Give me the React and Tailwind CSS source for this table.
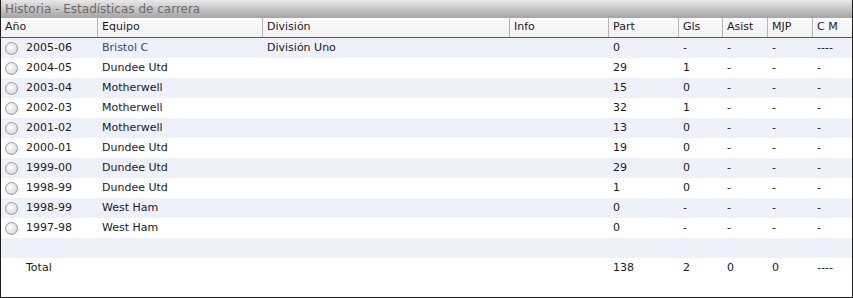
import React from "react";

const cols = [
  { key: "year", label: "Año", w: "w-[97px]" },
  { key: "team", label: "Equipo", w: "w-[165px]" },
  { key: "div", label: "División", w: "w-[247px]" },
  { key: "info", label: "Info", w: "w-[99px]" },
  { key: "part", label: "Part", w: "w-[70px]" },
  { key: "gls", label: "Gls", w: "w-[44px]" },
  { key: "asist", label: "Asist", w: "w-[45px]" },
  { key: "mjp", label: "MJP", w: "w-[45px]" },
  { key: "cm", label: "C M", w: "flex-1" },
];

const rows = [
  ["2005-06", "Bristol C", "División Uno", "", "0", "-", "-", "-", "----", true],
  ["2004-05", "Dundee Utd", "", "", "29", "1", "-", "-", "-"],
  ["2003-04", "Motherwell", "", "", "15", "0", "-", "-", "-"],
  ["2002-03", "Motherwell", "", "", "32", "1", "-", "-", "-"],
  ["2001-02", "Motherwell", "", "", "13", "0", "-", "-", "-"],
  ["2000-01", "Dundee Utd", "", "", "19", "0", "-", "-", "-"],
  ["1999-00", "Dundee Utd", "", "", "29", "0", "-", "-", "-"],
  ["1998-99", "Dundee Utd", "", "", "1", "0", "-", "-", "-"],
  ["1998-99", "West Ham", "", "", "0", "-", "-", "-", "-"],
  ["1997-98", "West Ham", "", "", "0", "-", "-", "-", "-"],
];

function Radio() {
  return (
    <span className="inline-block w-[13px] h-[13px] rounded-full border border-[#9a9a9a] bg-[radial-gradient(circle_at_40%_35%,#ffffff_0%,#e4e4e4_55%,#c8c8c8_100%)] mr-[8px] ml-[4px] shrink-0" />
  );
}

export default function App() {
  return (
    <div
      className="w-[853px] h-[298px] flex flex-col bg-white border-l border-r border-b border-[#1e1e1e] text-[11px] text-[#1a1a1a]"
      style={{ fontFamily: '"DejaVu Sans", Verdana, sans-serif' }}
    >
      <div className="h-[18px] shrink-0 flex items-center px-[4px] bg-gradient-to-b from-[#e9e9e9] to-[#a4a4a4] text-[#6a6a6a] text-[12px]">
        Historia - Estadísticas de carrera
      </div>
      <div className="h-[20px] shrink-0 flex bg-gradient-to-b from-[#fbfbfb] to-[#f1f1f1] border-b border-[#5a5a5a]">
        {cols.map((c, i) => (
          <div
            key={c.key}
            className={`${c.w} flex items-center pl-[4px] ${i < cols.length - 1 ? "border-r border-[#b5b5b5]" : ""}`}
          >
            {c.label}
          </div>
        ))}
      </div>
      {rows.map((r, ri) => (
        <div
          key={ri}
          className={`h-[20px] shrink-0 flex items-center ${ri % 2 === 0 ? "bg-[#eef1fa]" : "bg-white"}`}
        >
          <div className="w-[97px] flex items-center">
            <Radio />
            <span>{r[0]}</span>
          </div>
          <div className={`w-[165px] pl-[4px] ${r[9] ? "text-[#33478a]" : ""}`}>{r[1]}</div>
          <div className="w-[247px] pl-[4px]">{r[2]}</div>
          <div className="w-[99px] pl-[4px]">{r[3]}</div>
          <div className="w-[70px] pl-[4px]">{r[4]}</div>
          <div className="w-[44px] pl-[4px]">{r[5]}</div>
          <div className="w-[45px] pl-[4px]">{r[6]}</div>
          <div className="w-[45px] pl-[4px]">{r[7]}</div>
          <div className="flex-1 pl-[4px]">{r[8]}</div>
        </div>
      ))}
      <div className="h-[20px] shrink-0 bg-[#eef1fa]" />
      <div className="h-[20px] shrink-0 flex items-center">
        <div className="w-[97px] pl-[25px]">Total</div>
        <div className="w-[165px]" />
        <div className="w-[247px]" />
        <div className="w-[99px]" />
        <div className="w-[70px] pl-[4px]">138</div>
        <div className="w-[44px] pl-[4px]">2</div>
        <div className="w-[45px] pl-[4px]">0</div>
        <div className="w-[45px] pl-[4px]">0</div>
        <div className="flex-1 pl-[4px]">----</div>
      </div>
      <div className="flex-1" />
    </div>
  );
}
